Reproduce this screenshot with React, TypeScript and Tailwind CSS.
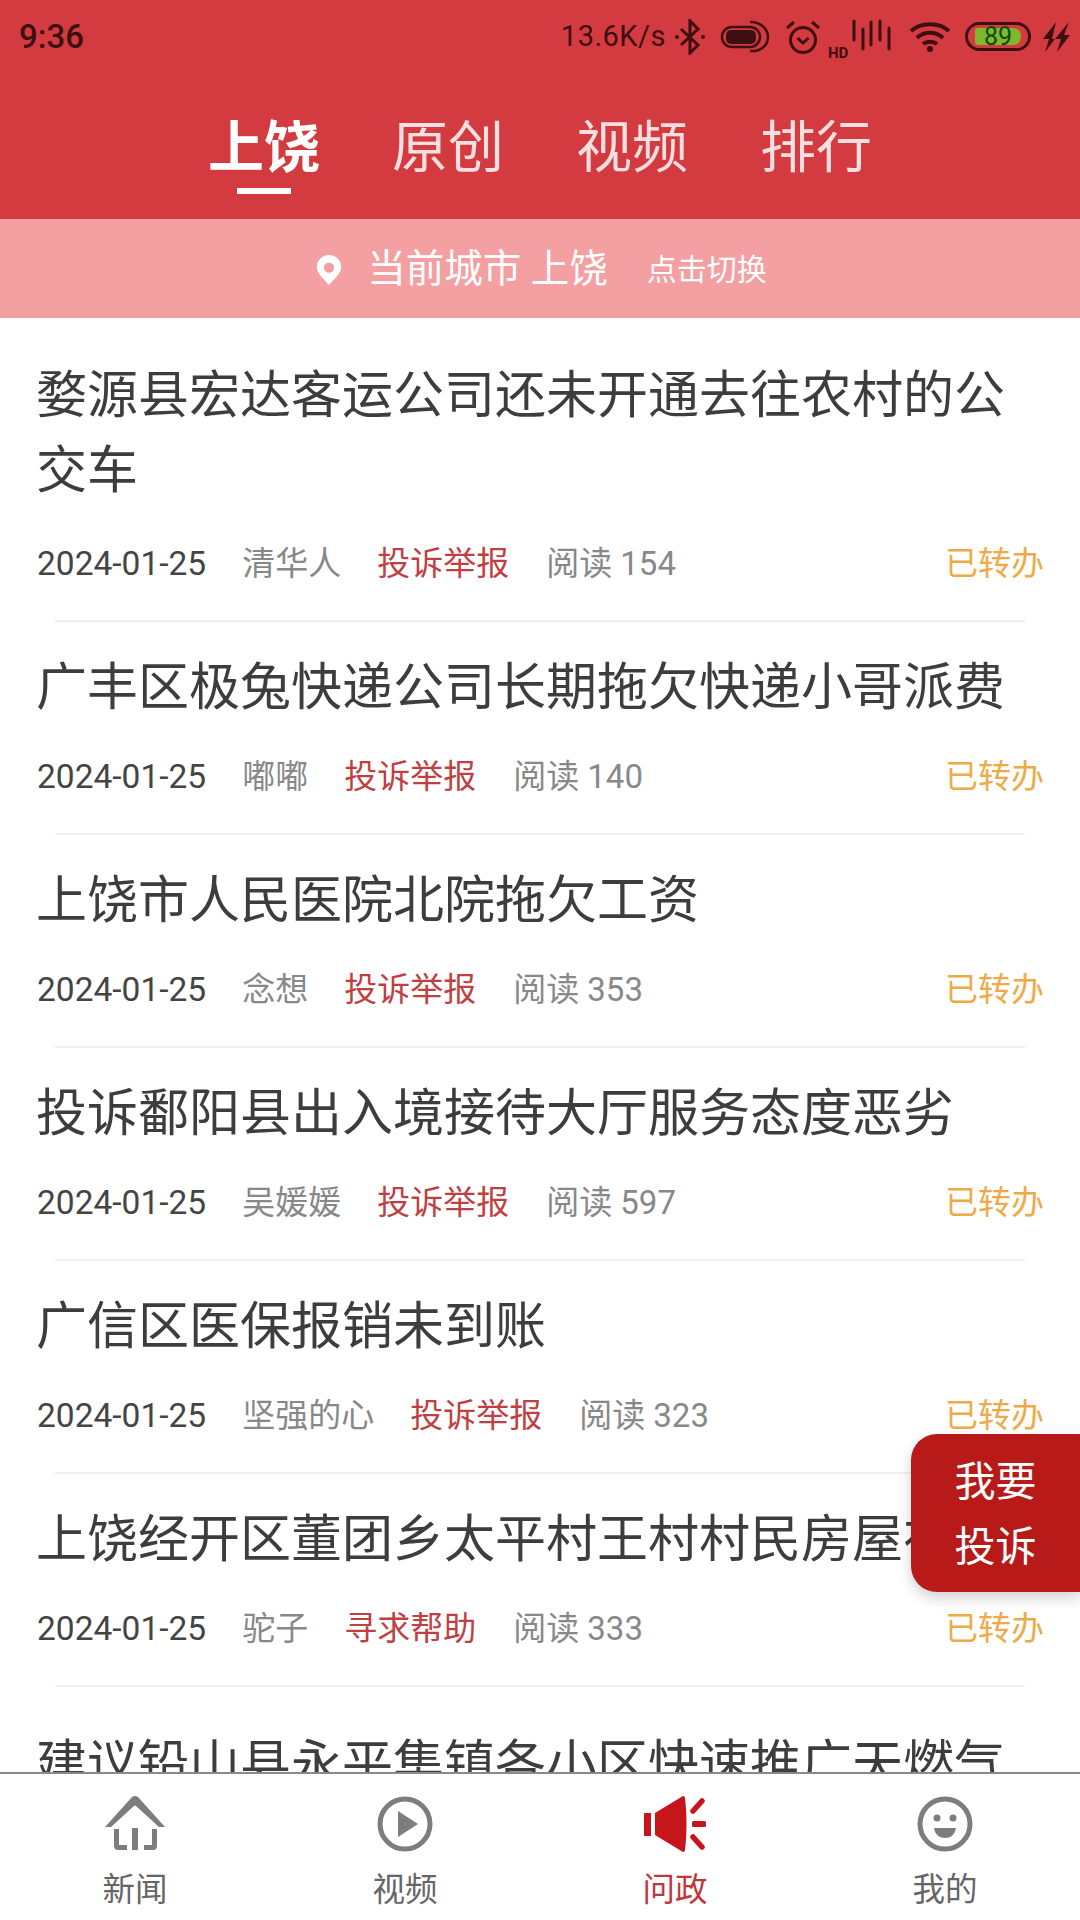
const rows = [
  { t: "婺源县宏达客运公司还未开通去往农村的公交车", a: "清华人", c: "投诉举报", r: "阅读 154" },
  { t: "广丰区极兔快递公司长期拖欠快递小哥派费", a: "嘟嘟", c: "投诉举报", r: "阅读 140" },
  { t: "上饶市人民医院北院拖欠工资", a: "念想", c: "投诉举报", r: "阅读 353" },
  { t: "投诉鄱阳县出入境接待大厅服务态度恶劣", a: "吴媛媛", c: "投诉举报", r: "阅读 597" },
  { t: "广信区医保报销未到账", a: "坚强的心", c: "投诉举报", r: "阅读 323" },
  { t: "上饶经开区董团乡太平村王村村民房屋在", a: "驼子", c: "寻求帮助", r: "阅读 333" },
];

function StatusIcons() {
  const k = "#3d0f12";
  return (
    <div className="flex items-center">
      <span className="text-[29px] leading-none tracking-[0.5px] text-[#3d0f12]">13.6K/s</span>
      <svg width="30" height="36" viewBox="0 0 30 36" fill="none" stroke={k} strokeWidth="3" className="ml-[9px]">
        <path d="M6 10 L23 26 L15 34 V2 L23 10 L6 26" />
        <circle cx="2" cy="18" r="2" fill={k} stroke="none" />
        <circle cx="28" cy="18" r="2" fill={k} stroke="none" />
      </svg>
      <svg width="50" height="34" viewBox="0 0 50 34" fill="none" stroke={k} strokeWidth="2.5" className="ml-[15px]">
        <rect x="2" y="7" width="38" height="20" rx="10" />
        <rect x="6" y="10" width="30" height="14" rx="5" fill={k} stroke="none" />
        <path d="M30 2 C44 2 48 12 48 17 C48 26 40 32 30 31" />
      </svg>
      <svg width="36" height="36" viewBox="0 0 36 36" fill="none" stroke={k} strokeWidth="3" className="ml-[15px]">
        <circle cx="18" cy="21" r="12.5" />
        <path d="M12.5 19 L18 24 L23.5 19" />
        <path d="M2 9 L9 3 M34 9 L27 3" />
      </svg>
      <div className="relative ml-[7px] h-[36px] w-[63px]">
        <span className="absolute bottom-[-6px] left-0 text-[15px] leading-none font-bold text-[#3d0f12]">HD</span>
        <svg width="40" height="32" viewBox="0 0 40 32" fill="none" stroke={k} strokeWidth="3" className="absolute left-[23px] top-0" strokeLinecap="round">
          <path d="M3 2 V21 M12 10 V30 M20 3 V26 M29 2 V21 M38 9 V30" />
        </svg>
      </div>
      <svg width="42" height="30" viewBox="0 0 42 30" fill="none" stroke={k} strokeWidth="4" className="ml-[18px]">
        <path d="M2 9 C12 0 30 0 40 9" />
        <path d="M8 16 C15 9 27 9 34 16" />
        <path d="M14 22 C18 19 24 19 28 22" />
        <circle cx="21" cy="27" r="3" fill={k} stroke="none" />
      </svg>
      <div className="relative ml-[14px] flex h-[29px] w-[66px] items-center justify-center rounded-[15px] border-[3px] border-[#3d0f12]">
        <div className="absolute inset-y-[3px] left-[7px] w-[46px] rounded-l-[3px] rounded-r-[8px] bg-[#7fb82a]" />
        <span className="relative text-[25px] leading-none text-[#0f4a14]">89</span>
      </div>
      <svg width="28" height="30" viewBox="0 0 28 30" fill={k} className="ml-[11px]">
        <path d="M14 0 L1 17 H7 L3 30 L13 17 H10 Z" />
        <path d="M27 0 L13 17 H19 L15 30 L28 13 H22 Z" />
      </svg>
    </div>
  );
}

function HomeIcon() {
  return (
    <svg width="60" height="56" viewBox="0 0 60 56" fill="#7d7d7d">
      <path d="M0 31 L27 1 Q30 -1 33 1 L60 31 H54 L31 10 Q30 9 29 10 L6 31 Z" />
      <path d="M9 33 H14 V49 H22 V54 H13 Q9 54 9 50 Z" />
      <rect x="27" y="32" width="6" height="22" />
      <path d="M52 33 H47 V49 H39 V54 H48 Q52 54 52 50 Z" />
    </svg>
  );
}

function PlayIcon() {
  return (
    <svg width="56" height="56" viewBox="0 0 56 56" fill="none">
      <circle cx="28" cy="28" r="25" stroke="#7d7d7d" strokeWidth="5" />
      <path d="M21 15 L41 28 L21 41 Z" fill="#7d7d7d" />
    </svg>
  );
}

function HornIcon() {
  return (
    <svg width="62" height="56" viewBox="0 0 62 56" fill="#c8141b">
      <rect x="0" y="17" width="7" height="23" />
      <path d="M11 17 L39 0 C40 0 41 1 41 2 C43 18 43 38 41 54 C41 55 40 56 39 56 L11 39 Z" />
      <path d="M49 15 L58 5 M49 41 L58 51" stroke="#c8141b" strokeWidth="5.5" strokeLinecap="round" />
      <rect x="48" y="25" width="14" height="6" rx="1.5" />
    </svg>
  );
}

function SmileIcon() {
  return (
    <svg width="56" height="56" viewBox="0 0 56 56" fill="none">
      <circle cx="28" cy="28" r="25" stroke="#7d7d7d" strokeWidth="5" />
      <circle cx="20" cy="22" r="3.5" fill="#7d7d7d" />
      <circle cx="36" cy="22" r="3.5" fill="#7d7d7d" />
      <path d="M17 32 H39 C38 39 33 42 28 42 C23 42 18 39 17 32 Z" fill="#7d7d7d" />
    </svg>
  );
}

function Row({ row, i }: { row: (typeof rows)[number]; i: number }) {
  return (
    <div className={i === 0 ? "pt-[40px]" : "pt-[28px]"}>
      <div className={`px-[36px] text-[51px] leading-[75px] text-[#3d3d3d] ${i === 5 ? "whitespace-nowrap" : ""}`}>{row.t}</div>
      <div className={`flex items-center pl-[37px] pr-[36px] text-[33px] leading-[40px] ${i === 0 ? "mt-[36px]" : "mt-[32px]"}`}>
        <span className="text-[33.5px] text-[#444444]">2024-01-25</span>
        <span className="ml-[36px] text-[#888888]">{row.a}</span>
        <span className="ml-[36px] text-[#bf3f43]">{row.c}</span>
        <span className="ml-[37px] text-[#888888]">{row.r}</span>
        <span className="ml-auto text-[#eeaa48]">已转办</span>
      </div>
      <div className="mx-[55px] mt-[36px] h-[2px] bg-[#efefef]" />
    </div>
  );
}

export default function App() {
  return (
    <div
      className="relative flex h-[1920px] w-[1080px] flex-col overflow-hidden bg-white"
      style={{ fontFamily: 'Roboto, "Noto Sans CJK SC", sans-serif' }}
    >
      <header className="h-[219px] shrink-0 bg-[#d33b40]">
        <div className="flex h-[71px] items-center justify-between pl-[19px] pr-[10px] pt-[2px]">
          <span className="text-[33px] font-medium leading-none text-[#3d0f12]">9:36</span>
          <StatusIcons />
        </div>
        <div className="flex justify-center gap-[72px] pt-[39px] text-[56px] leading-[76px] text-[#f6dfe0]">
          <div className="relative font-bold text-white">
            上饶
            <div className="absolute left-1/2 top-[78px] h-[6px] w-[54px] -translate-x-1/2 bg-white" />
          </div>
          <div>原创</div>
          <div>视频</div>
          <div>排行</div>
        </div>
      </header>
      <div className="flex h-[99px] shrink-0 items-center justify-center bg-[#f4a0a2] pl-[3px] pt-[2px] text-white">
        <svg width="26" height="30" viewBox="0 0 26 32" fill="#ffffff" className="mr-[25px]">
          <path fillRule="evenodd" d="M13 0 C21 0 26 6 26 13 C26 20 18 26 13 32 C8 26 0 20 0 13 C0 6 5 0 13 0 Z M13 8 A5.5 5.5 0 1 0 13 19 A5.5 5.5 0 1 0 13 8 Z" />
        </svg>
        <span className="text-[38.5px] leading-none">当前城市 上饶</span>
        <span className="ml-[39px] text-[30px] leading-none">点击切换</span>
      </div>
      <main className="min-h-0 flex-1 overflow-hidden">
        {rows.map((r, i) => (
          <Row key={i} row={r} i={i} />
        ))}
        <div className="whitespace-nowrap px-[36px] pt-[40px] text-[51px] leading-[75px] text-[#3d3d3d]">
          建议铅山县永平集镇各小区快速推广天燃气
        </div>
      </main>
      <nav className="flex h-[148px] shrink-0 border-t-2 border-[#8a8a8a] bg-white">
        {[
          { l: "新闻", I: HomeIcon, x: "text-[#666666]" },
          { l: "视频", I: PlayIcon, x: "text-[#666666]" },
          { l: "问政", I: HornIcon, x: "text-[#c0363b]" },
          { l: "我的", I: SmileIcon, x: "text-[#666666]" },
        ].map(({ l, I, x }) => (
          <div key={l} className="flex flex-1 flex-col items-center pt-[21px]">
            <div className="flex h-[58px] items-center justify-center"><I /></div>
            <span className={`mt-[18px] text-[32.5px] leading-[38px] ${x}`}>{l}</span>
          </div>
        ))}
      </nav>
      <div className="absolute right-0 top-[1434px] flex h-[158px] w-[169px] flex-col items-center justify-center rounded-l-[26px] bg-[#b81a1a] pt-[3px] text-[41px] leading-[65px] text-white shadow-[0_6px_14px_rgba(0,0,0,0.18)]">
        <span>我要</span>
        <span>投诉</span>
      </div>
    </div>
  );
}
